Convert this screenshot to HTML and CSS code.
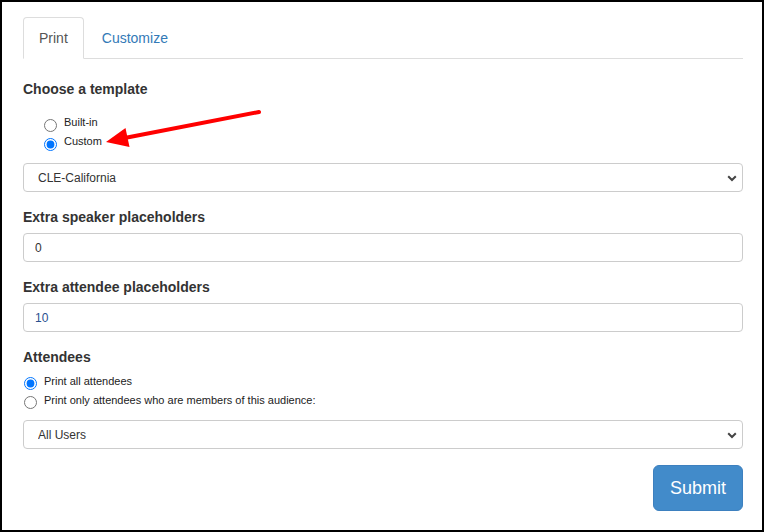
FILE: index.html
```html
<!DOCTYPE html>
<html>
<head>
<meta charset="utf-8">
<link rel="stylesheet" href="styles.css">
</head>
<body>
<div class="frame">
  <ul class="tabs">
    <li class="tab active"><a>Print</a></li>
    <li class="tab"><a>Customize</a></li>
  </ul>

  <div class="heading h-first">Choose a template</div>
  <div class="radios indented">
    <label class="radio-row"><input type="radio" name="tpl"><span>Built-in</span></label>
    <label class="radio-row"><input type="radio" name="tpl" checked><span>Custom</span></label>
  </div>
  <div class="select-wrap sel-first">
    <select class="field select"><option>CLE-California</option></select>
    <svg class="chev" width="10" height="7" viewBox="0 0 10 7"><path d="M1.2 1.2 L5 5 L8.8 1.2" fill="none" stroke="#444" stroke-width="2"/></svg>
  </div>

  <div class="heading h-next">Extra speaker placeholders</div>
  <input class="field input" type="text" value="0">

  <div class="heading h-next">Extra attendee placeholders</div>
  <input class="field input blue" type="text" value="10">

  <div class="heading h-next">Attendees</div>
  <div class="radios att">
    <label class="radio-row"><input type="radio" name="att" checked><span>Print all attendees</span></label>
    <label class="radio-row"><input type="radio" name="att"><span>Print only attendees who are members of this audience:</span></label>
  </div>
  <div class="select-wrap sel-att">
    <select class="field select"><option>All Users</option></select>
    <svg class="chev" width="10" height="7" viewBox="0 0 10 7"><path d="M1.2 1.2 L5 5 L8.8 1.2" fill="none" stroke="#444" stroke-width="2"/></svg>
  </div>

  <div class="actions">
    <button class="submit">Submit</button>
  </div>
</div>
<svg class="arrow" width="764" height="532" viewBox="0 0 764 532">
  <line x1="259" y1="112" x2="122" y2="138.5" stroke="#f00" stroke-width="4" stroke-linecap="round"/>
  <polygon points="106,142 125.5,128 129.5,147" fill="#f00"/>
</svg>
</body>
</html>
```
FILE: styles.css
```css
html, body {
  margin: 0;
  padding: 0;
  background: #fff;
}
body {
  position: relative;
  width: 764px;
  height: 532px;
  font-family: "Liberation Sans", Arial, sans-serif;
  color: #333;
}
.frame {
  box-sizing: border-box;
  width: 764px;
  height: 532px;
  border: 2px solid #000;
  padding: 15px 19px 0 21px;
  display: flex;
  flex-direction: column;
}
.tabs {
  list-style: none;
  margin: 0;
  padding: 0;
  display: flex;
  border-bottom: 1px solid #ddd;
  height: 41px;
}
.tab {
  margin-right: 2px;
  margin-bottom: -1px;
}
.tab a {
  display: block;
  padding: 10px 15px;
  line-height: 20px;
  font-size: 14px;
  color: #337ab7;
  border: 1px solid transparent;
  border-radius: 4px 4px 0 0;
}
.tab.active a {
  color: #555;
  background: #fff;
  border-color: #ddd;
  border-bottom-color: transparent;
}
.heading {
  font-size: 14px;
  font-weight: bold;
  line-height: 20px;
  color: #333;
}
.h-first { margin-top: 20px; }
.h-next { margin-top: 15px; }
.radios {
  display: flex;
  flex-direction: column;
}
.indented {
  margin-top: 14px;
  padding-left: 21px;
}
.att {
  margin-top: 5px;
  padding-left: 1px;
}
.radio-row {
  display: flex;
  align-items: flex-start;
  height: 18.5px;
  font-size: 11px;
  line-height: 18px;
  color: #222;
}
.radio-row input {
  width: 13px;
  height: 13px;
  margin: 6px 7px 0 0;
  flex: none;
}
.att .radio-row input {
  margin-top: 5px;
}
.field {
  box-sizing: border-box;
  width: 100%;
  height: 29px;
  border: 1px solid #ccc;
  border-radius: 4px;
  background: #fff;
  font-family: "Liberation Sans", Arial, sans-serif;
  font-size: 12px;
  color: #333;
  outline: none;
}
.select-wrap {
  position: relative;
}
.sel-first { margin-top: 13px; }
.sel-att { margin-top: 11px; }
.select {
  appearance: none;
  -webkit-appearance: none;
  padding: 0 30px 0 14px;
}
.chev {
  position: absolute;
  right: 6px;
  top: 12px;
}
.input {
  margin-top: 6px;
  padding: 0 11px;
}
.input.blue {
  color: #2a4f8f;
}
.actions {
  display: flex;
  justify-content: flex-end;
  margin-top: 16px;
}
.submit {
  box-sizing: border-box;
  height: 46px;
  width: 90px;
  padding: 0;
  border: 1px solid #3d80bf;
  border-radius: 6px;
  background: #428bca;
  color: #fff;
  font-family: "Liberation Sans", Arial, sans-serif;
  font-size: 18px;
}
.arrow {
  position: absolute;
  left: 0;
  top: 0;
  pointer-events: none;
}
```
